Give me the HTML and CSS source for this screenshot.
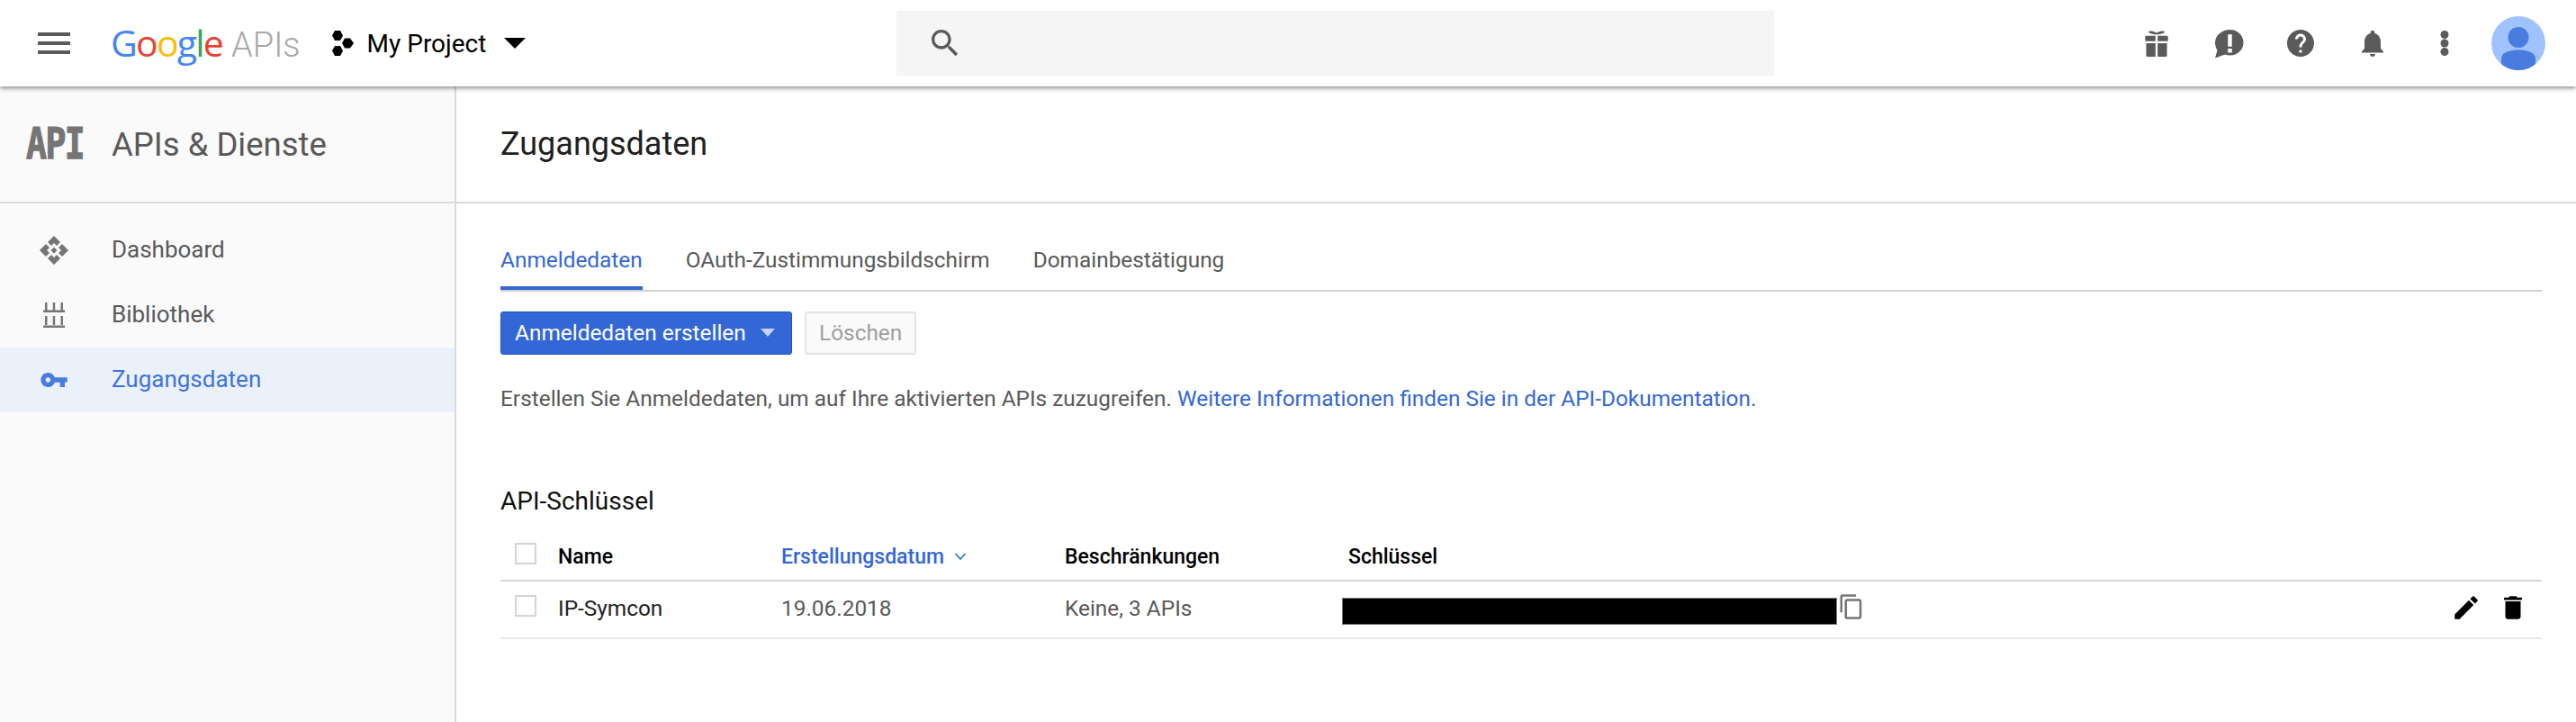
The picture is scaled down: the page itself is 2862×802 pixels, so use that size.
FILE: index.html
```html
<!DOCTYPE html>
<html lang="de">
<head>
<meta charset="utf-8">
<title>Zugangsdaten</title>
<link rel="stylesheet" href="styles.css">
</head>
<body>
<header class="topbar">
  <div class="top-left">
    <svg class="menu-icon" viewBox="0 0 24 24"><path d="M3 18h18v-2H3v2zm0-5h18v-2H3v2zm0-7v2h18V6H3z"/></svg>
    <div class="logo"><span class="g-blue">G</span><span class="g-red">o</span><span class="g-yellow">o</span><span class="g-blue">g</span><span class="g-green">l</span><span class="g-red">e</span><span class="logo-apis">APIs</span></div>
    <svg class="project-icon" viewBox="0 0 28 28"><polygon points="6,0 12,0 15,5.5 12,11 6,11 3,5.5"/><polygon points="17,8.500 23,8.500 27,14 23,19.500 17,19.500 14,14"/><polygon points="6,17 12,17 15,22.500 12,28 6,28 3,22.500"/></svg>
    <span class="project-name">My Project</span>
    <span class="project-caret"></span>
  </div>
  <div class="search">
    <svg class="search-icon" viewBox="0 0 24 24"><path d="M15.500 14h-.79l-.28-.27C15.410 12.590 16 11.110 16 9.500 16 5.910 13.090 3 9.500 3S3 5.910 3 9.500 5.910 16 9.500 16c1.610 0 3.090-.59 4.230-1.570l.27.28v.79l5 4.990L20.490 19l-4.990-5zm-6 0C7.010 14 5 11.990 5 9.500S7.010 5 9.500 5 14 7.010 14 9.500 11.990 14 9.500 14z"/></svg>
  </div>
  <div class="top-right">
    <svg class="top-icon" viewBox="0 0 24 24"><path d="M4.500 6.500h6.700v4H4c-.3 0-.5-.2-.5-.5V7.500c0-.6.400-1 1-1zm8.300 0h6.700c.6 0 1 .4 1 1V10c0 .3-.2.500-.5.500h-7.200v-4zM4.300 12h6.900v10H5.300c-.6 0-1-.4-1-1v-9zm8.500 0h6.900v9c0 .6-.4 1-1 1h-5.900V12zM6.500 3.200c1.800-.5 3.800.3 5.500 1.200 1.700-.9 3.700-1.700 5.500-1.200.5.200.5.900 0 1.100-1.700.8-3.500 1.200-5.500 1.200s-3.800-.4-5.500-1.200c-.5-.2-.5-.9 0-1.100z"/></svg>
    <svg class="top-icon" viewBox="0 0 24 24"><path fill-rule="evenodd" d="M13 2c5.800 0 10 4.200 10 9.500S18.800 21 13 21c-1.300 0-2.500-.2-3.600-.6L2 23l1.700-5.800C2.600 15.600 2 13.700 2 11.500 2 6.200 7.200 2 13 2zm-1.500 3.500v9h3v-9h-3zm0 10.500v3h3v-3h-3z"/></svg>
    <svg class="top-icon" viewBox="0 0 24 24"><path d="M12 2C6.480 2 2 6.480 2 12s4.480 10 10 10 10-4.480 10-10S17.520 2 12 2zm1 17h-2v-2h2v2zm2.070-7.750l-.9.92C13.450 12.900 13 13.500 13 15h-2v-.5c0-1.100.45-2.100 1.170-2.830l1.240-1.260c.37-.36.59-.86.59-1.410 0-1.100-.9-2-2-2s-2 .9-2 2H8c0-2.210 1.790-4 4-4s4 1.790 4 4c0 .88-.36 1.680-.93 2.250z"/></svg>
    <svg class="top-icon" viewBox="0 0 24 24"><path d="M12 22c1.100 0 2-.9 2-2h-4c0 1.100.89 2 2 2zm6-6v-5c0-3.070-1.640-5.640-4.500-6.320V4c0-.83-.67-1.500-1.500-1.500s-1.500.67-1.500 1.500v.68C7.630 5.360 6 7.920 6 11v5l-2 2v1h16v-1l-2-2z"/></svg>
    <svg class="top-icon" viewBox="0 0 24 24"><circle cx="12" cy="5.700" r="3"/><circle cx="12" cy="12" r="3"/><circle cx="12" cy="18.300" r="3"/></svg>
    <svg class="avatar" viewBox="0 0 60 60"><defs><clipPath id="av"><circle cx="30" cy="30" r="30"/></clipPath></defs><circle cx="30" cy="30" r="30" fill="#a0c3ff"/><g clip-path="url(#av)"><circle cx="30" cy="23.500" r="11.500" fill="#4a7ce0"/><path d="M11 60V47c0-7 10-9.500 19-9.500S49 40 49 47v13z" fill="#4a7ce0"/></g></svg>
  </div>
</header>
<div class="layout">
  <aside class="sidebar">
    <div class="side-head">
      <span class="api-mark"><span class="api-mark-text">API</span></span>
      <span class="side-title">APIs &amp; Dienste</span>
    </div>
    <nav class="side-nav">
      <a class="side-item">
        <svg class="side-icon" viewBox="0 0 32 32"><path d="M9 7l7-7 7 7-4 4-3-3-3 3zM7 9l4 4-3 3 3 3-4 4-7-7zM25 9l7 7-7 7-4-4 3-3-3-3zM9 25l4-4 3 3 3-3 4 4-7 7zM16 12.500l3.500 3.500-3.500 3.500-3.500-3.500z"/></svg>
        <span class="side-label">Dashboard</span>
      </a>
      <a class="side-item">
        <svg class="side-icon" viewBox="0 0 32 32"><path d="M6 2h2.500v9H6zM14.700 2h2.500v9h-2.500zM23.500 2h2.500v9h-2.500zM4 10.500h24V13H4zM6 17h2.500v10H6zM14.700 17h2.500v10h-2.500zM23.500 17h2.500v10h-2.500zM4 27.500h24V30H4z"/></svg>
        <span class="side-label">Bibliothek</span>
      </a>
      <a class="side-item active">
        <svg class="side-icon" viewBox="0 0 24 24"><path d="M12.650 10C11.830 7.670 9.610 6 7 6c-3.310 0-6 2.690-6 6s2.690 6 6 6c2.610 0 4.830-1.670 5.650-4H17v4h4v-4h2v-4H12.650zM7 14c-1.100 0-2-.9-2-2s.9-2 2-2 2 .9 2 2-.9 2-2 2z"/></svg>
        <span class="side-label">Zugangsdaten</span>
      </a>
    </nav>
  </aside>
  <main class="content">
    <div class="page-head"><h1 class="page-title">Zugangsdaten</h1></div>
    <div class="page-body">
      <div class="tabs">
        <a class="tab active">Anmeldedaten</a>
        <a class="tab">OAuth-Zustimmungsbildschirm</a>
        <a class="tab">Domainbestätigung</a>
      </div>
      <div class="toolbar">
        <button class="btn-primary">Anmeldedaten erstellen<span class="btn-caret"></span></button>
        <button class="btn-disabled">Löschen</button>
      </div>
      <p class="intro">Erstellen Sie Anmeldedaten, um auf Ihre aktivierten APIs zuzugreifen. <a class="link">Weitere Informationen finden Sie in der API-Dokumentation.</a></p>
      <h2 class="section-title">API-Schlüssel</h2>
      <div class="table">
        <div class="row row-head">
          <span class="checkbox"></span>
          <span>Name</span>
          <span class="sorted">Erstellungsdatum<svg class="sort-icon" viewBox="0 0 16 16"><path d="M2.500 5l5.500 6 5.500-6" fill="none" stroke="currentColor" stroke-width="1.700"/></svg></span>
          <span>Beschränkungen</span>
          <span>Schlüssel</span>
        </div>
        <div class="row row-body">
          <span class="checkbox"></span>
          <span class="cell-name">IP-Symcon</span>
          <span>19.06.2018</span>
          <span>Keine, 3 APIs</span>
          <div class="cell-key">
            <span class="redacted"></span>
            <svg class="copy-icon" viewBox="0 0 24 24"><path d="M16 1H4c-1.100 0-2 .9-2 2v14h2V3h12V1zm3 4H8c-1.100 0-2 .9-2 2v14c0 1.100.9 2 2 2h11c1.100 0 2-.9 2-2V7c0-1.100-.9-2-2-2zm0 16H8V7h11v14z"/></svg>
            <div class="actions">
              <svg class="action-icon" viewBox="0 0 24 24"><path d="M3 17.250V21h3.750L17.810 9.940l-3.750-3.750L3 17.250zM20.710 7.040c.39-.39.39-1.020 0-1.410l-2.340-2.340c-.39-.39-1.020-.39-1.410 0l-1.830 1.830 3.750 3.750 1.830-1.830z"/></svg>
              <svg class="action-icon" viewBox="0 0 24 24"><path d="M6 19c0 1.100.9 2 2 2h8c1.100 0 2-.9 2-2V7H6v12zM19 4h-3.500l-1-1h-5l-1 1H5v2h14V4z"/></svg>
            </div>
          </div>
        </div>
      </div>
    </div>
  </main>
</div>
</body>
</html>
```
FILE: styles.css
```css
* { box-sizing: border-box; }
html, body { height: 100%; }
body {
  margin: 0;
  background: #fff;
  font-family: Roboto, "Liberation Sans", sans-serif;
  font-size: 26px;
  color: #595959;
  overflow: hidden;
}
.topbar {
  position: relative;
  z-index: 2;
  display: flex;
  height: 96px;
  background: #fff;
  box-shadow: 0 2px 5px rgba(0,0,0,.45);
}
.top-left { width: 996px; display: flex; align-items: center; padding-left: 36px; }
.menu-icon { width: 48px; height: 48px; fill: #5a5a5a; flex: none; }
.logo { margin-left: 39px; font-family: "Open Sans", sans-serif; font-size: 41px; letter-spacing: -1.800px; line-height: 48px; white-space: nowrap; }
.g-blue { color: #4285f4; }
.g-red { color: #ea4335; }
.g-yellow { color: #fbbc05; }
.g-green { color: #34a853; }
.logo-apis { color: #a8a8a8; margin-left: 10px; letter-spacing: 0; font-family: Roboto, sans-serif; font-weight: 300; font-size: 38px; }
.project-icon { width: 28px; height: 28px; margin-left: 32px; fill: #000; flex: none; }
.project-name { margin-left: 14px; font-size: 28px; color: #000; white-space: nowrap; }
.project-caret { margin-left: 20px; width: 0; height: 0; border-left: 12px solid transparent; border-right: 12px solid transparent; border-top: 12px solid #000; }
.search { width: 975px; margin: 12px 0; background: #f5f5f5; display: flex; align-items: center; padding-left: 34px; }
.search-icon { width: 40px; height: 40px; fill: #5a5a5a; }
.top-right { flex: 1; display: flex; align-items: center; justify-content: flex-end; padding-right: 34px; }
.top-icon { width: 36px; height: 36px; margin-right: 44px; fill: #5a5a5a; flex: none; }
.top-icon:nth-child(5) { margin-right: 34px; }
.avatar { width: 60px; height: 60px; flex: none; }
.layout { display: flex; height: 706px; }
.sidebar { width: 507px; flex: none; background: #fafafa; border-right: 2px solid #dadada; }
.side-head { height: 130px; display: flex; align-items: center; border-bottom: 2px solid #dadada; padding-left: 29px; }
.api-mark { width: 95px; flex: none; }
.api-mark-text { display: inline-block; font-family: "DejaVu Sans Mono", monospace; font-weight: 700; font-size: 38px; line-height: 38px; color: #757575; letter-spacing: -1.500px; -webkit-text-stroke: 1px #757575; transform: scaleY(1.25); }
.side-title { font-size: 36.500px; color: #595959; white-space: nowrap; }
.side-nav { padding-top: 16px; }
.side-item { height: 72px; display: flex; align-items: center; gap: 48px; padding-left: 44px; }
.side-label { padding-bottom: 2px; }
.side-icon { width: 32px; height: 32px; fill: #757575; flex: none; }
.side-item.active { background: #eaf1fb; color: #3f73dc; }
.side-item.active .side-icon { fill: #4a7ce0; }
.content { flex: 1; min-width: 0; }
.page-head { height: 130px; display: flex; align-items: center; border-bottom: 2px solid #dadada; padding-left: 49px; }
.page-title { margin: 0; font-size: 36px; font-weight: 400; color: #212121; }
.page-body { padding: 0 38px 0 49px; font-size: 24.400px; }
.tabs { margin-top: 48px; display: flex; gap: 48px; border-bottom: 2px solid #d0d0d0; height: 50px; }
.tab { height: 48px; line-height: 30px; padding-bottom: 14px; border-bottom: 4px solid transparent; white-space: nowrap; }
.tab.active { color: #3367d6; border-bottom-color: #3367d6; }
.toolbar { margin-top: 22px; display: flex; gap: 14px; height: 48px; }
.btn-primary, .btn-disabled { font: inherit; border-radius: 3px; height: 48px; display: flex; align-items: center; white-space: nowrap; margin: 0; }
.btn-primary { width: 324px; padding: 0 0 2px 15px; background: #3367d6; border: 1px solid #1a56c4; color: #fff; }
.btn-caret { margin-left: 16px; width: 0; height: 0; border-left: 8px solid transparent; border-right: 8px solid transparent; border-top: 9px solid #c3d3f3; }
.btn-disabled { width: 124px; padding: 0 0 2px 14px; background: #fafafa; border: 2px solid #e4e4e4; color: #9e9e9e; }
.intro { margin: 31px 0 0; line-height: 36px; white-space: nowrap; }
.link { color: #3367d6; }
.section-title { margin: 78px 0 0; font-size: 28px; line-height: 36px; font-weight: 400; color: #111; }
.table { margin-top: 13px; }
.row { display: grid; grid-template-columns: 64px 248px 315px 315px 1fr; align-items: center; }
.row-head { height: 58px; padding-bottom: 2px; border-bottom: 2px solid #d6d6d6; font-size: 23px; font-weight: 500; color: #000; }
.row-head > :not(.checkbox) { position: relative; top: 3px; }
.row-body { height: 64px; padding-bottom: 8px; border-bottom: 2px solid #e8e8e8; }
.row-body > span:not(.checkbox) { position: relative; top: 2px; }
.checkbox { display: block; width: 24px; height: 24px; margin-left: 16px; background: #fff; border: 2px solid #d4d4d4; }
.sorted { color: #3367d6; display: flex; align-items: center; gap: 10px; }
.sort-icon { width: 16px; height: 16px; }
.cell-name { color: #222; }
.cell-key { display: flex; align-items: center; }
.redacted { width: 550px; height: 30px; margin: 12px 0 0 -7px; background: #000; border: 1px solid #777; flex: none; }
.copy-icon { width: 30px; height: 30px; margin-left: 1px; margin-top: 2px; fill: #757575; flex: none; }
.actions { margin-left: auto; display: flex; gap: 18px; padding-right: 15px; margin-top: 4px; }
.action-icon { width: 34px; height: 34px; fill: #000; }
```
